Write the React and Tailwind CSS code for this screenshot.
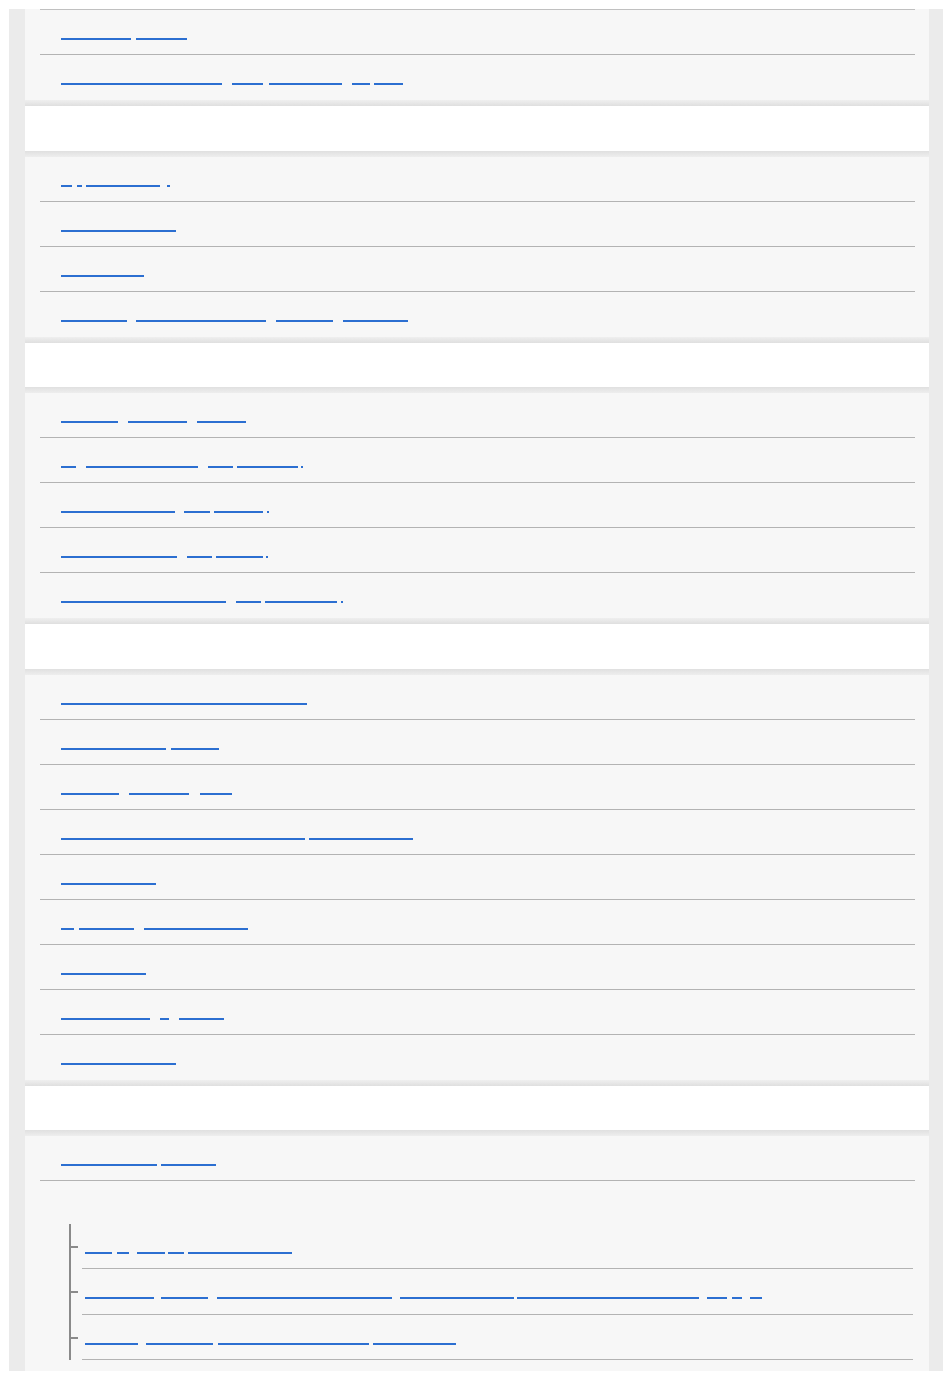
import React from 'react';

// Each word: [text, startX, endX] — the underline runs from start to end
const topRows = [
  [['Attaching', 61, 131], ['straps', 136, 187]],
  [['Troubleshooting', 61, 222], ['for', 232, 263], ['charging', 269, 342], ['the', 352, 370], ['unit', 374, 403]],
];

const sections = [
  {
    title: 'Getting started',
    rows: [
      [['On', 61, 72], ['/', 77, 82], ['Switching', 86, 160], ['.', 167, 170]],
      [['Setting the clock', 61, 176]],
      [['Parts guide', 61, 144]],
      [['Using', 61, 127], ['the touch panel', 136, 266], ['menu', 276, 333], ['screen', 343, 408]],
    ],
  },
  {
    title: 'Recording',
    rows: [
      [['Shooting', 61, 118], ['movies', 128, 187], ['mode', 197, 246]],
      [['A', 61, 76], ['Recording video', 86, 198], ['in', 208, 233], ['low light', 237, 298], ['.', 301, 303]],
      [['Shooting photos', 61, 175], ['on', 184, 210], ['a tripod', 214, 263], ['.', 267, 269]],
      [['Shooting photos', 61, 177], ['in', 187, 212], ['a series', 216, 263], ['.', 266, 268]],
      [['Using the zoom function', 61, 226], ['for', 236, 261], ['close-ups', 265, 337], ['.', 341, 343]],
    ],
  },
  {
    title: 'Playback',
    rows: [
      [['Playing back images on the camera', 61, 307]],
      [['Viewing images', 61, 166], ['in a', 171, 219]],
      [['Playing', 61, 119], ['movies', 129, 189], ['fast', 200, 232]],
      [['Deleting images that were recorded with', 61, 305], ['the camera', 309, 413]],
      [['Index screen', 61, 156]],
      [['A', 61, 74], ['Slide', 79, 134], ['show settings', 144, 248]],
      [['Protecting', 61, 146]],
      [['Rotating an', 61, 150], ['a', 160, 169], ['image', 179, 224]],
      [['Image review', 61, 176]],
    ],
  },
];

const lastRow = [['Connecting to', 61, 157], ['a TV', 161, 216]];

const subRows = [
  [['Using', 85, 112], ['a', 117, 129], ['Wi-Fi', 137, 165], ['or', 168, 184], ['smartphone app', 188, 292]],
  [['Pairing', 85, 154], ['with', 161, 208], ['a computer using', 217, 392], ['the dedicated', 400, 514], ['software application', 517, 699], ['via', 707, 727], ['a', 732, 742], ['PC', 750, 762]],
  [['Sending', 85, 138], ['images to', 146, 213], ['a smartphone over', 218, 369], ['a network', 373, 456]],
];

function LinkWords({ words }) {
  let prev = words[0][1];
  return (
    <a href="#" className="flex items-start">
      {words.map(([t, s, e], i) => {
        const ml = s - prev;
        prev = e;
        return (
          <span
            key={i}
            style={{ width: e - s, marginLeft: ml }}
            className="block shrink-0 whitespace-nowrap border-b-2 border-[#2c6fd1] font-['Liberation_Sans',sans-serif] text-[7px] leading-[16px] text-transparent"
          >
            {t}
          </span>
        );
      })}
    </a>
  );
}

function Row({ words }) {
  return (
    <li className="h-[45px] border-b border-[#b3b3b3] pl-[21px] pt-[12px] last:border-b-0">
      <LinkWords words={words} />
    </li>
  );
}

function SectionHeader({ title }) {
  return (
    <div>
      <div className="h-[6px] bg-linear-to-b from-[#efefef] to-[#dfdfdf]" />
      <div className="flex h-[44.5px] items-center bg-white px-[36px]">
        <h2 className="font-['Liberation_Sans',sans-serif] text-[16px] font-bold text-transparent">{title}</h2>
      </div>
      <div className="h-[6px] bg-linear-to-b from-[#e0e0e0] to-[#eeeeee]" />
    </div>
  );
}

export default function App() {
  return (
    <div className="min-h-[1379px] bg-white pl-[9px] pt-[9px]">
      <div className="w-[934px] bg-[#ebebeb] pl-[16px] pr-[14px]">
        <div className="bg-[#f7f7f7]">
          <ul className="ml-[15px] mr-[14px] border-t border-[#c0c0c0]">
            {topRows.map((r, i) => (
              <Row key={i} words={r} />
            ))}
          </ul>

          {sections.map((sec) => (
            <div key={sec.title}>
              <SectionHeader title={sec.title} />
              <ul className="ml-[15px] mr-[14px]">
                {sec.rows.map((r, i) => (
                  <Row key={i} words={r} />
                ))}
              </ul>
            </div>
          ))}

          <SectionHeader title="Connections" />
          <ul className="ml-[15px] mr-[14px]">
            <li className="pb-[11px]">
              <div className="h-[45px] border-b border-[#b3b3b3] pl-[21px] pt-[12px]">
                <LinkWords words={lastRow} />
              </div>
              <ul className="ml-[29px] mr-[2px] mt-[43px] border-l-2 border-[#8a8a8a]">
                {subRows.map((r, i) => (
                  <li key={i} className="flex h-[45.4px] items-start">
                    <span className="mt-[22px] h-[2px] w-[7px] shrink-0 bg-[#8a8a8a]" />
                    <div className="ml-[4px] h-full flex-1 border-b border-[#b3b3b3] pl-[3px] pt-[12px]">
                      <LinkWords words={r} />
                    </div>
                  </li>
                ))}
              </ul>
            </li>
          </ul>
        </div>
      </div>
    </div>
  );
}
